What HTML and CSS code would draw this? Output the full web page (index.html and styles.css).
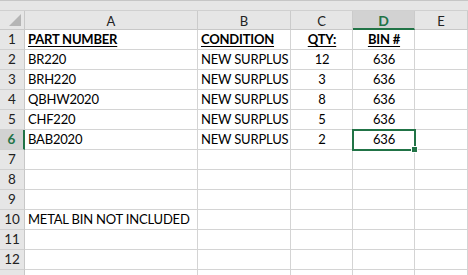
FILE: index.html
```html
<!DOCTYPE html>
<html>
<head>
<meta charset="utf-8">
<link rel="stylesheet" href="styles.css">
</head>
<body>
<div class="topbar"></div>
<div class="sheet">
  <div class="corner"><div class="tri"></div></div>
  <div class="ch">A</div>
  <div class="ch">B</div>
  <div class="ch">C</div>
  <div class="ch sel">D</div>
  <div class="ch">E</div>

  <div class="rh">1</div>
  <div class="c hd">PART NUMBER</div>
  <div class="c hd">CONDITION</div>
  <div class="c hd ctr">QTY:</div>
  <div class="c hd ctr">BIN #</div>
  <div class="c"></div>

  <div class="rh">2</div>
  <div class="c">BR220</div>
  <div class="c">NEW SURPLUS</div>
  <div class="c ctr">12</div>
  <div class="c ctr">636</div>
  <div class="c"></div>

  <div class="rh">3</div>
  <div class="c">BRH220</div>
  <div class="c">NEW SURPLUS</div>
  <div class="c ctr">3</div>
  <div class="c ctr">636</div>
  <div class="c"></div>

  <div class="rh">4</div>
  <div class="c">QBHW2020</div>
  <div class="c">NEW SURPLUS</div>
  <div class="c ctr">8</div>
  <div class="c ctr">636</div>
  <div class="c"></div>

  <div class="rh">5</div>
  <div class="c">CHF220</div>
  <div class="c">NEW SURPLUS</div>
  <div class="c ctr">5</div>
  <div class="c ctr">636</div>
  <div class="c"></div>

  <div class="rh sel">6</div>
  <div class="c">BAB2020</div>
  <div class="c">NEW SURPLUS</div>
  <div class="c ctr">2</div>
  <div class="c ctr active">636<span class="handle"></span></div>
  <div class="c"></div>

  <div class="rh">7</div>
  <div class="c"></div><div class="c"></div><div class="c"></div><div class="c"></div><div class="c"></div>

  <div class="rh">8</div>
  <div class="c"></div><div class="c"></div><div class="c"></div><div class="c"></div><div class="c"></div>

  <div class="rh">9</div>
  <div class="c"></div><div class="c"></div><div class="c"></div><div class="c"></div><div class="c"></div>

  <div class="rh">10</div>
  <div class="c over">METAL BIN NOT INCLUDED</div>
  <div class="c"></div><div class="c"></div><div class="c"></div><div class="c"></div>

  <div class="rh">11</div>
  <div class="c"></div><div class="c"></div><div class="c"></div><div class="c"></div><div class="c"></div>

  <div class="rh">12</div>
  <div class="c"></div><div class="c"></div><div class="c"></div><div class="c"></div><div class="c"></div>

  <div class="rh"></div>
  <div class="c"></div><div class="c"></div><div class="c"></div><div class="c"></div><div class="c"></div>
</div>
</body>
</html>
```
FILE: styles.css
```css
html, body {
  margin: 0;
  padding: 0;
  background: #ffffff;
  overflow: hidden;
  width: 468px;
  height: 275px;
}
body {
  font-family: Lato, "Liberation Sans", sans-serif;
  font-size: 13px;
  letter-spacing: -0.2px;
  color: #000;
}
.topbar {
  background: #e6e6e6;
  border-top: 1px solid #c6c6c6;
  box-sizing: border-box;
  border-bottom: 1px solid #d0d0d0;
  height: 11px;
}
.sheet {
  display: grid;
  grid-template-columns: 25px 173px 93px 62px 62px 53px;
  grid-template-rows: 19px repeat(13, 20px);
  height: 264px;
  overflow: hidden;
}
.corner {
  background: #e6e6e6;
  border-right: 1px solid #c8c8c8;
  border-bottom: 1px solid #c8c8c8;
  position: relative;
}
.tri {
  position: absolute;
  right: 3px;
  bottom: 3px;
  width: 0;
  height: 0;
  border-left: 12px solid transparent;
  border-bottom: 12px solid #b5b5b5;
}
.ch {
  background: #e6e6e6;
  border-right: 1px solid #cbcbcb;
  border-bottom: 1px solid #c8c8c8;
  display: flex;
  align-items: center;
  justify-content: center;
  font-size: 13px;
  letter-spacing: 0;
  color: #222;
  padding-top: 1px;
  box-sizing: border-box;
}
.ch.sel {
  background: #d2d2d2;
  color: #217346;
  font-weight: 700;
  border-bottom: 2px solid #217346;
  font-size: 14px;
  padding-top: 2px;
}
.rh {
  background: #e6e6e6;
  border-right: 1px solid #c8c8c8;
  border-bottom: 1px solid #d0d0d0;
  display: flex;
  align-items: flex-end;
  justify-content: center;
  padding-bottom: 2px;
  box-sizing: border-box;
  font-size: 13.5px;
  letter-spacing: 0;
  color: #222;
}
.rh.sel {
  background: #d2d2d2;
  color: #217346;
  font-weight: 700;
  border-right: 2px solid #217346;
}
.c {
  border-right: 1px solid #d4d4d4;
  border-bottom: 1px solid #d4d4d4;
  box-sizing: border-box;
  display: flex;
  align-items: flex-end;
  padding: 0 2px 2px 3px;
  white-space: nowrap;
  position: relative;
}
.c.ctr {
  justify-content: center;
}
.c.hd {
  font-weight: 700;
  text-decoration: underline;
  text-underline-offset: 2px;
  text-decoration-thickness: 1px;
}
.c.over {
  overflow: visible;
}
.c.active {
  outline: 2px solid #217346;
  outline-offset: -1px;
  z-index: 2;
}
.handle {
  position: absolute;
  right: -4px;
  bottom: -4px;
  width: 5px;
  height: 5px;
  background: #217346;
  border: 1px solid #fff;
}
```
